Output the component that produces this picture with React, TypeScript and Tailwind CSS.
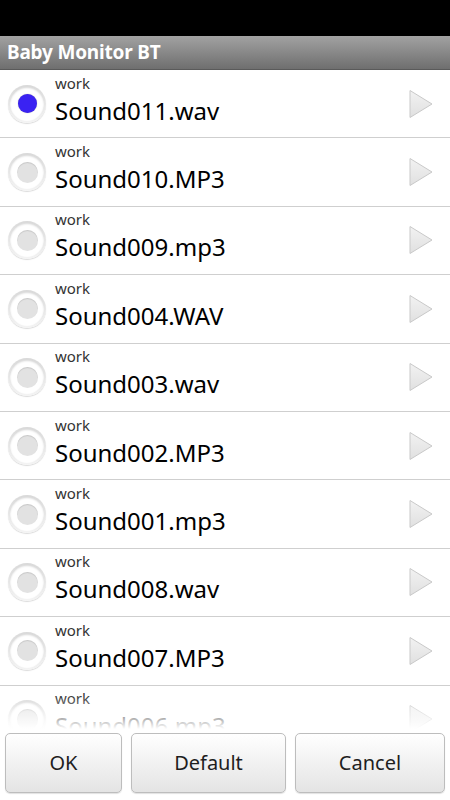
import { useState } from "react";

const sounds = [
  "Sound011.wav",
  "Sound010.MP3",
  "Sound009.mp3",
  "Sound004.WAV",
  "Sound003.wav",
  "Sound002.MP3",
  "Sound001.mp3",
  "Sound008.wav",
  "Sound007.MP3",
  "Sound006.mp3",
];

function Radio({ checked }: { checked: boolean }) {
  return (
    <div className="w-[38px] h-[38px] rounded-full bg-gradient-to-b from-[#d9d9d9] to-[#f4f4f4] p-[2px] shadow-[0_1px_1px_rgba(0,0,0,0.15)]">
      <div className="w-full h-full rounded-full bg-white flex items-center justify-center shadow-[inset_0_1px_2px_rgba(0,0,0,0.15)]">
        {checked ? (
          <div className="w-[19px] h-[19px] rounded-full bg-[#3a22f2] shadow-[0_0_1px_rgba(0,0,0,0.4)]" />
        ) : (
          <div className="w-[21px] h-[21px] rounded-full bg-[#e2e2e2] shadow-[inset_0_1px_1px_rgba(0,0,0,0.12)]" />
        )}
      </div>
    </div>
  );
}

function PlayIcon() {
  return (
    <svg width="26" height="30" viewBox="0 0 26 30">
      <defs>
        <linearGradient id="pg" x1="0" y1="0" x2="0" y2="1">
          <stop offset="0" stopColor="#f2f2f2" />
          <stop offset="1" stopColor="#e0e0e0" />
        </linearGradient>
      </defs>
      <path d="M2 1.5 L24 15 L2 28.5 Z" fill="url(#pg)" stroke="#c9c9c9" strokeWidth="1" strokeLinejoin="round" />
    </svg>
  );
}

export default function App() {
  const [selected, setSelected] = useState(0);

  return (
    <div className="w-[450px] h-[800px] flex flex-col bg-white overflow-hidden" style={{ fontFamily: '"Noto Sans", "Open Sans", sans-serif' }}>
      <div className="h-[36px] bg-black shrink-0" />
      <div className="h-[34px] shrink-0 bg-gradient-to-b from-[#a2a2a2] to-[#6f6f6f] border-b border-[#5a5a5a] flex items-center px-[7px]">
        <span className="text-white font-bold text-[19px] leading-none tracking-[-0.2px]">Baby Monitor BT</span>
      </div>

      <div className="flex-1 relative overflow-hidden">
        {sounds.map((name, i) => (
          <div
            key={name}
            className="h-[68.4px] border-b border-[#cfcfcf] flex items-center cursor-pointer"
            onClick={() => setSelected(i)}
          >
            <div className="pl-[8px] pr-[9px] shrink-0">
              <Radio checked={selected === i} />
            </div>
            <div className="flex-1 flex flex-col gap-[5px] -mt-[9px]">
              <span className="text-[15px] leading-[18px] text-[#333]">work</span>
              <span className="text-[24px] leading-[28px] text-black">{name}</span>
            </div>
            <div className="pr-[16px] shrink-0 flex items-center">
              <PlayIcon />
            </div>
          </div>
        ))}
        <div className="absolute left-0 right-0 bottom-0 h-[34px] bg-gradient-to-b from-white/0 to-white" />
      </div>

      <div className="h-[71px] shrink-0 bg-white flex items-start gap-[9px] px-[5px] pt-[4px]">
        {[
          ["OK", "w-[117px]"],
          ["Default", "w-[155px]"],
          ["Cancel", "w-[150px]"],
        ].map(([label, w]) => (
          <button
            key={label}
            className={`${w} h-[60px] rounded-[5px] border border-[#bdbdbd] bg-gradient-to-b from-white to-[#e4e4e4] shadow-[0_1px_1px_rgba(0,0,0,0.12)] text-[20px] text-[#1e1e1e] flex items-center justify-center`}
          >
            {label}
          </button>
        ))}
      </div>
    </div>
  );
}
